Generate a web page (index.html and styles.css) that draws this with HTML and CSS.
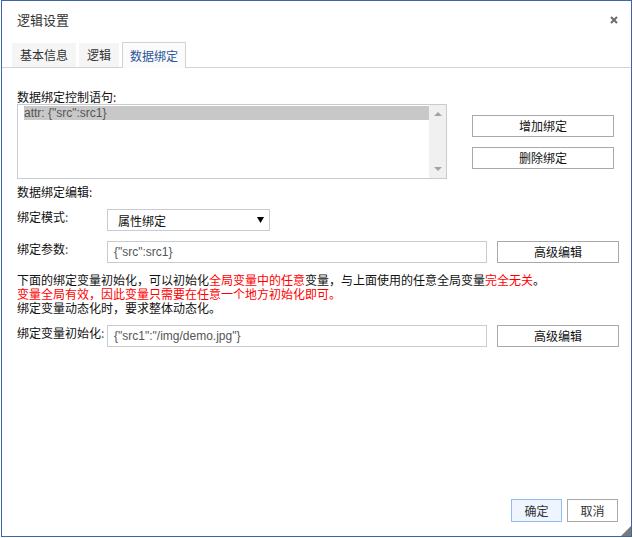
FILE: index.html
```html
<!DOCTYPE html>
<html lang="zh-CN">
<head>
<meta charset="utf-8">
<title>逻辑设置</title>
<link rel="stylesheet" href="styles.css">
</head>
<body>
<div class="dialog">
  <div class="header">
    <span class="title">逻辑设置</span>
    <svg class="close" width="8" height="8" viewBox="0 0 8 8"><path d="M1 1L7 7M7 1L1 7" stroke="#6b6b6b" stroke-width="2" fill="none"/></svg>
  </div>
  <div class="tabs">
    <div class="tab">基本信息</div>
    <div class="tab">逻辑</div>
    <div class="tab active">数据绑定</div>
  </div>
  <div class="content">
    <div class="bind-row">
      <div class="bind-list-col">
        <div class="label">数据绑定控制语句<span class="colon">:</span></div>
        <div class="listbox">
          <div class="list-items">
            <div class="list-item selected">attr: {"src":src1}</div>
          </div>
          <div class="scrollbar"><span class="arrow up"></span><span class="arrow down"></span></div>
        </div>
      </div>
      <div class="bind-buttons">
        <button class="btn btn-wide">增加绑定</button>
        <button class="btn btn-wide">删除绑定</button>
      </div>
    </div>
    <div class="label section-label">数据绑定编辑<span class="colon">:</span></div>
    <div class="form-row">
      <div class="form-label">绑定模式<span class="colon-grey">:</span></div>
      <div class="select"><span>属性绑定</span><svg class="caret" width="7" height="6" viewBox="0 0 7 6"><polygon points="0,0 7,0 3.5,6" fill="#000"/></svg></div>
    </div>
    <div class="form-row">
      <div class="form-label">绑定参数<span class="colon-grey">:</span></div>
      <div class="input">{"src":src1}</div>
      <button class="btn btn-adv">高级编辑</button>
    </div>
    <div class="note">
      <div class="note-line">下面的绑定变量初始化，可以初始化<span class="red">全局变量中的任意</span>变量，与上面使用的任意全局变量<span class="red">完全无关</span>。</div>
      <div class="note-line red">变量全局有效，因此变量只需要在任意一个地方初始化即可。</div>
      <div class="note-line">绑定变量动态化时，要求整体动态化。</div>
    </div>
    <div class="form-row">
      <div class="form-label">绑定变量初始化<span class="colon-grey">:</span></div>
      <div class="input">{"src1":"/img/demo.jpg"}</div>
      <button class="btn btn-adv">高级编辑</button>
    </div>
  </div>
  <div class="footer">
    <button class="btn btn-foot btn-primary">确定</button>
    <button class="btn btn-foot">取消</button>
  </div>
  <svg class="grip" width="10" height="10" viewBox="0 0 10 10"><polygon points="10,0 10,10 0,10" fill="#7a7a7a"/></svg>
</div>
</body>
</html>
```

FILE: styles.css
```css
* { box-sizing: border-box; }
html, body { margin: 0; padding: 0; background: #fff; }
body {
  font-family: "Noto Sans CJK SC", "Liberation Sans", sans-serif;
  font-size: 12px;
  color: #111;
}
.dialog {
  position: relative;
  margin-left: 1px;
  width: 631px;
  height: 537px;
  border: 1px solid #3b67a9;
  background: #fff;
  display: flex;
  flex-direction: column;
}
.header {
  height: 41px;
  flex-shrink: 0;
  display: flex;
  justify-content: space-between;
  align-items: flex-start;
  padding: 11px 13px 0 15px;
}
.title {
  font-size: 13px;
  line-height: 15px;
  color: #333;
}
.close { margin-top: 4px; display: block; }
.tabs {
  height: 26px;
  flex-shrink: 0;
  display: flex;
  align-items: flex-end;
  gap: 3px;
  padding-left: 10px;
  border-bottom: 1px solid #d0d4d8;
}
.tab {
  height: 24px;
  line-height: 24px;
  padding: 0 8px;
  background: #f5f5f5;
  color: #333;
  font-size: 12px;
}
.tab.active {
  height: 26px;
  line-height: 25px;
  padding: 0 7px;
  margin-bottom: -1px;
  border: 1px solid #cfd3d7;
  border-bottom: none;
  background: #fbfbfb;
  color: #2a5699;
}
.content {
  padding: 22px 0 0 15px;
}
.label { height: 14px; line-height: 14px; overflow: visible; }
.colon { color: #8b0033; }
.colon-grey { color: #555; }
.bind-row { display: flex; }
.bind-list-col { width: 430px; flex-shrink: 0; }
.listbox {
  height: 75px;
  border: 1px solid #c6ccd3;
  display: flex;
}
.list-items { flex: 1; padding: 1px 0 0 6px; }
.list-item {
  height: 14px;
  line-height: 14px;
  font-family: "Liberation Sans", sans-serif;
  font-size: 12px;
  color: #555;
}
.list-item.selected { background: #c8c8c8; }
.scrollbar {
  width: 17px;
  background: #f0f0f0;
  display: flex;
  flex-direction: column;
  justify-content: space-between;
  align-items: center;
  padding: 7px 0 7px;
}
.arrow { width: 0; height: 0; border-left: 4px solid transparent; border-right: 4px solid transparent; }
.arrow.up { border-bottom: 4px solid #a3a3a3; }
.arrow.down { border-top: 4px solid #a3a3a3; }
.bind-buttons {
  margin-left: 25px;
  padding-top: 25px;
  display: flex;
  flex-direction: column;
  gap: 10px;
  flex-shrink: 0;
}
.btn {
  font-family: "Noto Sans CJK SC", "Liberation Sans", sans-serif;
  font-size: 12px;
  color: #111;
  background: #fff;
  border: 1px solid #a9a9a9;
  padding: 0;
  margin: 0;
  height: 22px;
  line-height: 20px;
  flex-shrink: 0;
}
.btn-wide { width: 142px; }
.btn-adv { width: 122px; margin-left: 10px; }
.section-label { margin-top: 6px; }
.form-row {
  display: flex;
  align-items: flex-start;
  height: 22px;
  margin-top: 10px;
}
.form-label {
  width: 90px;
  height: 15px;
  line-height: 14px;
  padding-top: 1px;
  flex-shrink: 0;
  white-space: nowrap;
}
.select {
  width: 163px;
  height: 22px;
  flex-shrink: 0;
  border: 1px solid #c6ccd3;
  display: flex;
  align-items: center;
  justify-content: space-between;
  padding: 0 5px 0 10px;
}
.caret { display: block; }
.input {
  width: 380px;
  height: 22px;
  flex-shrink: 0;
  border: 1px solid #c6ccd3;
  padding-left: 6px;
  line-height: 20px;
  font-family: "Liberation Sans", sans-serif;
  font-size: 12px;
  color: #555;
}
.note {
  margin-top: 10px;
  white-space: nowrap;
}
.note-line { height: 14px; line-height: 14px; }
.red { color: #ff0000; }
.footer {
  margin-top: auto;
  flex-shrink: 0;
  display: flex;
  justify-content: flex-end;
  gap: 5px;
  padding: 0 13px 14px 0;
}
.btn-foot {
  width: 51px;
  height: 23px;
  line-height: 21px;
  color: #333;
}
.btn-primary {
  background: #eef5ff;
  border-color: #93bcf2;
}
.grip {
  position: absolute;
  right: 0;
  bottom: 0;
  display: block;
}
```
